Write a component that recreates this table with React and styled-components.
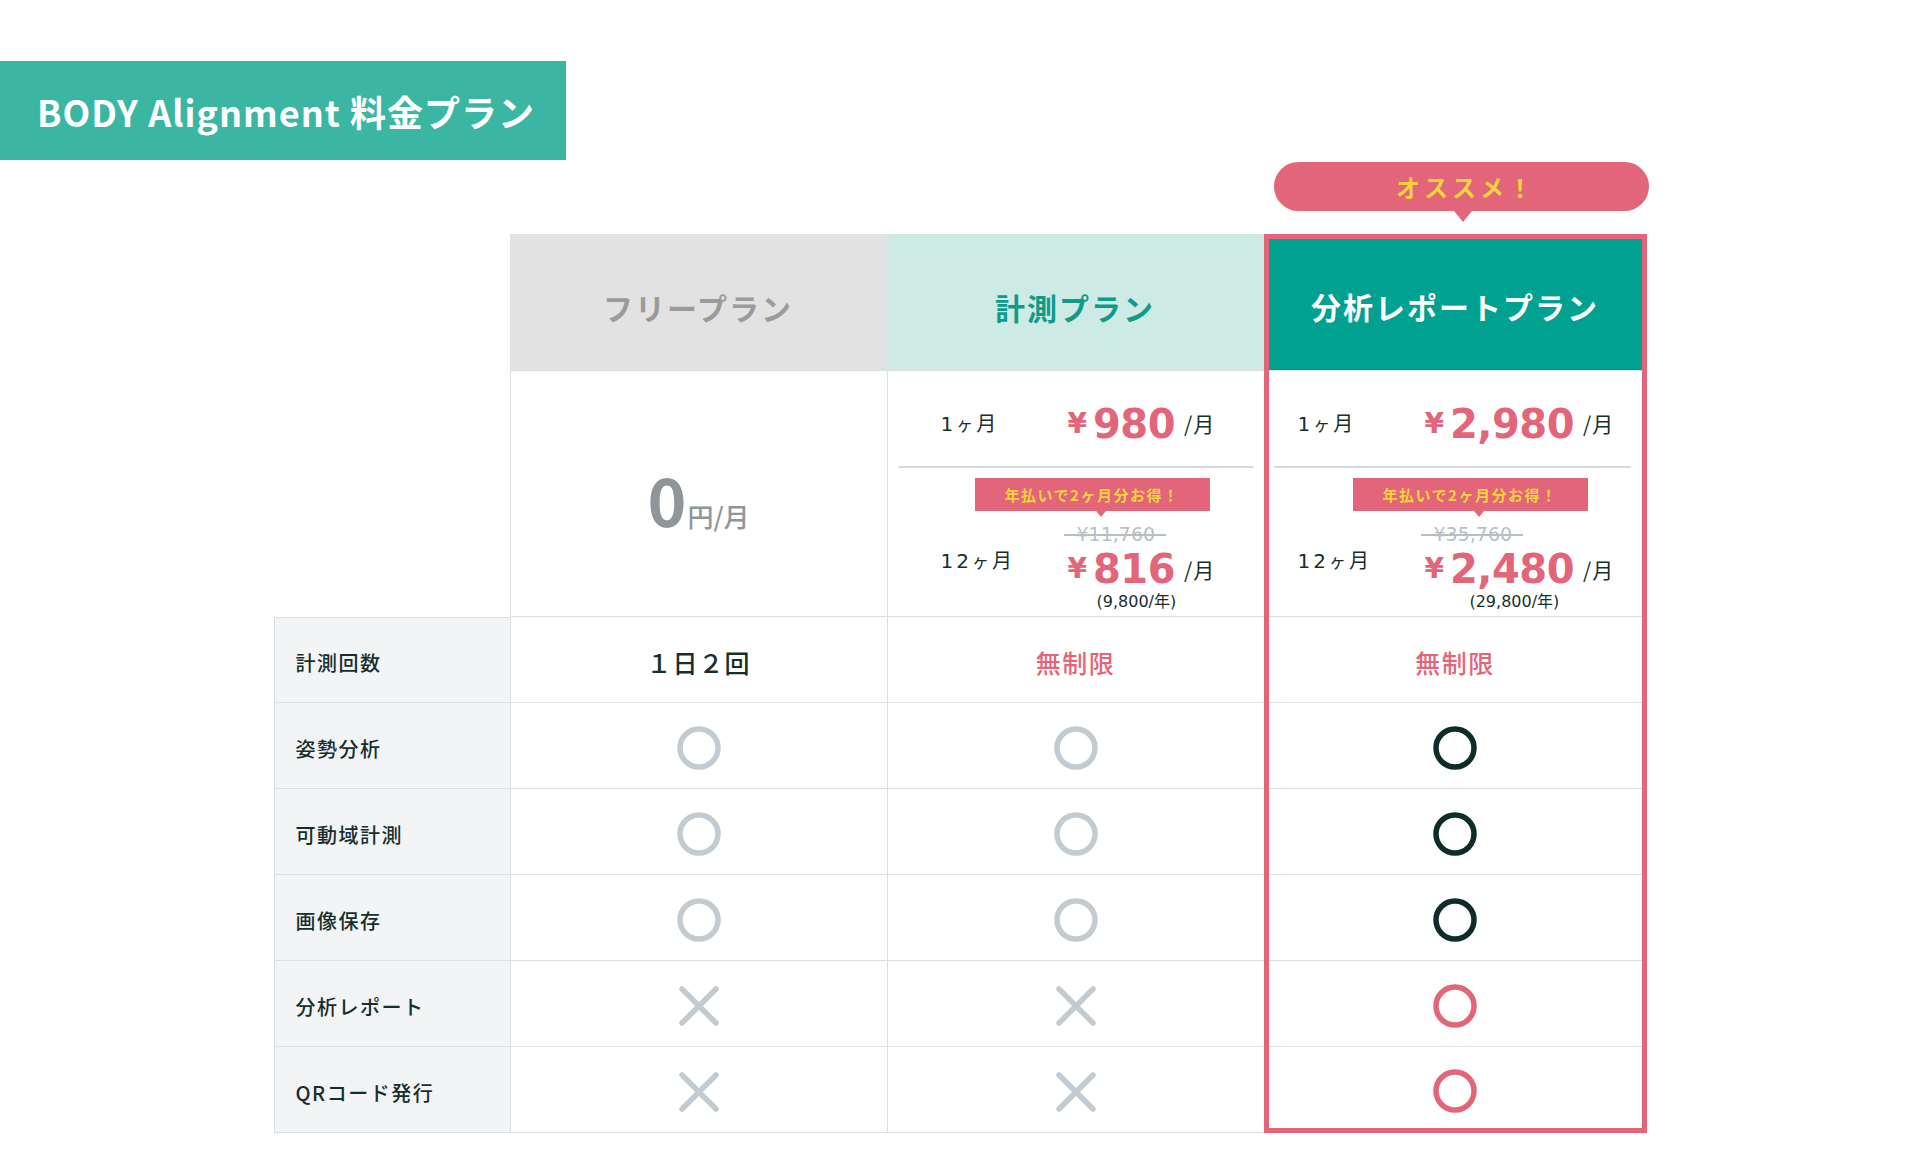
import React from "react";
import styled, { createGlobalStyle } from "styled-components";

const PINK = "#e26579";
const YELLOW = "#f8d33c";
const LINE = "#dcdfe2";
const DARK = "#172f2c";
const JP = `"Noto Sans CJK JP", "Noto Sans", sans-serif`;
const NUM = `"DejaVu Sans", "Noto Sans CJK JP", sans-serif`;

const Global = createGlobalStyle`
  html, body { margin: 0; padding: 0; background: #fff; }
  body { font-family: ${JP}; color: ${DARK}; }
  * { box-sizing: border-box; }
`;

const Page = styled.div`
  width: 1920px;
  min-height: 1153px;
  padding-top: 61px;
`;

const Title = styled.h1`
  margin: 0;
  width: 566px;
  height: 99px;
  display: flex;
  align-items: center;
  padding: 0 0 0 37px;
  background: #3bb6a2;
  color: #fff;
  font-family: ${JP};
  font-weight: 700;
  font-size: 36px;
  letter-spacing: 1px;
`;

const TableWrap = styled.div`
  width: 1373px;
  margin: 2px auto 0;
`;

const BadgeRow = styled.div`
  display: flex;
  justify-content: flex-end;
  margin-right: -2px;
  height: 72px;
`;

const Badge = styled.div`
  width: 375px;
  display: flex;
  flex-direction: column;
  align-items: center;
`;

const Pill = styled.div`
  width: 100%;
  height: 49px;
  border-radius: 25px;
  background: ${PINK};
  color: ${YELLOW};
  display: flex;
  align-items: center;
  justify-content: center;
  font-weight: 700;
  font-size: 24px;
  letter-spacing: 4px;
  padding-left: 10px;
`;

const Pointer = styled.div`
  width: 0;
  height: 0;
  margin-left: 3px;
  border-left: 9px solid transparent;
  border-right: 9px solid transparent;
  border-top: 11px solid ${PINK};
`;

const Table = styled.div`
  display: flex;
  align-items: flex-start;
`;

const LabelCol = styled.div`
  width: 236px;
  display: flex;
  flex-direction: column;
`;

const Spacer = styled.div`
  height: 383px;
`;

const LabelCell = styled.div`
  height: 86px;
  display: flex;
  align-items: center;
  padding: 5px 0 0 21px;
  background: #f3f4f6;
  border-left: 1px solid ${LINE};
  border-bottom: 1px solid ${LINE};
  &:nth-child(2) { border-top: 1px solid ${LINE}; }
  font-size: 20px;
  font-weight: 500;
  letter-spacing: 1.5px;
  color: ${DARK};
`;

const PlanCol = styled.div`
  width: ${(p) => p.$w}px;
  display: flex;
  flex-direction: column;
  ${(p) => (p.$featured ? `border: 5px solid ${PINK};` : "")}
`;

const Header = styled.div`
  height: ${(p) => p.$h}px;
  display: flex;
  align-items: center;
  justify-content: center;
  padding-top: ${(p) => p.$pt}px;
  background: ${(p) => p.$bg};
  color: ${(p) => p.$fg};
  font-size: 30px;
  font-weight: 700;
  letter-spacing: 2px;
`;

const PriceCell = styled.div`
  height: 247px;
  display: flex;
  flex-direction: column;
  border-left: ${(p) => (p.$noLeft ? "none" : `1px solid ${LINE}`)};
  border-bottom: 1px solid ${LINE};
  border-top: 1px solid ${LINE};
`;

const FreePrice = styled(PriceCell)`
  align-items: center;
  justify-content: center;
  padding-top: 8px;
  color: #8f9599;
`;

const ZeroGroup = styled.div`
  display: flex;
  align-items: baseline;
  line-height: 1;
`;

const Zero = styled.span`
  font-size: 66px;
  font-weight: 700;
`;

const ZeroUnit = styled.span`
  font-size: 26px;
  font-weight: 500;
  margin-left: 1px;
`;

const MonthRow = styled.div`
  height: 95px;
  display: flex;
  align-items: center;
  padding: 10px 0 0 ${(p) => p.$pl}px;
`;

const MonthLabel = styled.div`
  width: 127px;
  flex: none;
  font-family: ${NUM};
  font-size: 20px;
  line-height: 30px;
  letter-spacing: 3px;
  color: ${DARK};
  margin-top: ${(p) => p.$mt || 0}px;
  & small { font-family: ${JP}; font-size: 17px; }
  & span { font-family: ${JP}; }
`;

const PriceLine = styled.div`
  display: flex;
  align-items: center;
  line-height: 1;
  margin-top: ${(p) => p.$mt || 0}px;
`;

const Yen = styled.span`
  font-family: ${NUM};
  font-weight: 700;
  font-size: 28px;
  color: ${PINK};
  margin-right: 6px;
`;

const Amount = styled.span`
  font-family: ${NUM};
  font-weight: 700;
  font-size: 40px;
  letter-spacing: -0.5px;
  color: ${PINK};
`;

const PerMonth = styled.span`
  font-family: ${JP};
  font-size: 21px;
  color: ${DARK};
  margin-left: 9px;
  letter-spacing: 1px;
`;

const Divider = styled.div`
  height: 2px;
  background: #d5dadd;
  margin: ${(p) => p.$m};
`;

const Deal = styled.div`
  position: relative;
  width: 235px;
  height: 33px;
  margin: 10px 0 0 ${(p) => p.$ml}px;
  background: ${PINK};
  color: ${YELLOW};
  display: flex;
  align-items: center;
  justify-content: center;
  font-size: 15px;
  font-weight: 700;
  letter-spacing: 1.5px;
  &::after {
    content: "";
    position: absolute;
    left: 121px;
    bottom: -6px;
    border-left: 5px solid transparent;
    border-right: 5px solid transparent;
    border-top: 6px solid ${PINK};
  }
`;

const YearRow = styled.div`
  display: flex;
  align-items: flex-start;
  margin-top: 13px;
  padding-left: ${(p) => p.$pl}px;
`;

const PriceStack = styled.div`
  display: flex;
  flex-direction: column;
  align-items: flex-start;
`;

const Strike = styled.div`
  font-family: ${NUM};
  font-size: 19px;
  line-height: 20px;
  color: #b8bfc4;
  padding: 0 11px 0 13px;
  margin-left: -4px;
  background: linear-gradient(
    to bottom,
    transparent 10px,
    #b8bfc4 10px,
    #b8bfc4 12px,
    transparent 12px
  );
`;

const Yearly = styled.div`
  align-self: center;
  margin: 4px 10px 0 0;
  font-family: ${NUM};
  font-size: 16px;
  line-height: 18px;
  color: ${DARK};
`;

const FeatureCell = styled.div`
  height: ${(p) => p.$h || 86}px;
  display: flex;
  align-items: center;
  justify-content: center;
  padding-top: ${(p) => p.$pt ?? 4}px;
  border-left: ${(p) => (p.$noLeft ? "none" : `1px solid ${LINE}`)};
  border-bottom: ${(p) => (p.$last && p.$noLeft ? "none" : `1px solid ${LINE}`)};
`;

const FeatureText = styled.span`
  font-size: 25px;
  font-weight: 500;
  letter-spacing: ${(p) => (p.$pink ? 1.5 : 1)}px;
  color: ${(p) => (p.$pink ? PINK : DARK)};
`;

const Mark = ({ type, color }) => {
  if (type === "x") {
    return (
      <svg width="44" height="44" viewBox="0 0 44 44">
        <path d="M5 5 L39 39 M39 5 L5 39" stroke={color} strokeWidth="5.5" strokeLinecap="round" fill="none" />
      </svg>
    );
  }
  return (
    <svg width="44" height="44" viewBox="0 0 44 44">
      <circle cx="22" cy="22" r="19" stroke={color} strokeWidth="5.5" fill="none" />
    </svg>
  );
};

const GRAY = "#c3cbd0";
const features = [
  { label: "計測回数", cells: [{ t: "１日２回" }, { t: "無制限", pink: true }, { t: "無制限", pink: true }] },
  { label: "姿勢分析", cells: [{ m: "o", c: GRAY }, { m: "o", c: GRAY }, { m: "o", c: "#0e2d29" }] },
  { label: "可動域計測", cells: [{ m: "o", c: GRAY }, { m: "o", c: GRAY }, { m: "o", c: "#0e2d29" }] },
  { label: "画像保存", cells: [{ m: "o", c: GRAY }, { m: "o", c: GRAY }, { m: "o", c: "#0e2d29" }] },
  { label: "分析レポート", cells: [{ m: "x", c: GRAY }, { m: "x", c: GRAY }, { m: "o", c: PINK }] },
  { label: "QRコード発行", cells: [{ m: "x", c: GRAY }, { m: "x", c: GRAY }, { m: "o", c: PINK }] },
];

const renderCell = (cell) =>
  cell.t ? <FeatureText $pink={cell.pink}>{cell.t}</FeatureText> : <Mark type={cell.m} color={cell.c} />;

const PaidPrice = ({ pl, divider, dealMl, month, year, strike, yearly, noLeft }) => (
  <PriceCell $noLeft={noLeft}>
    <MonthRow $pl={pl}>
      <MonthLabel>1<small>ヶ</small><span>月</span></MonthLabel>
      <PriceLine>
        <Yen>¥</Yen>
        <Amount>{month}</Amount>
        <PerMonth>/月</PerMonth>
      </PriceLine>
    </MonthRow>
    <Divider $m={divider} />
    <Deal $ml={dealMl}>年払いで2ヶ月分お得！</Deal>
    <YearRow $pl={pl}>
      <MonthLabel $mt={21}>12<small>ヶ</small><span>月</span></MonthLabel>
      <PriceStack>
        <Strike>¥{strike}</Strike>
        <PriceLine $mt={5}>
          <Yen>¥</Yen>
          <Amount>{year}</Amount>
          <PerMonth>/月</PerMonth>
        </PriceLine>
        <Yearly>({yearly}/年)</Yearly>
      </PriceStack>
    </YearRow>
  </PriceCell>
);

export default function App() {
  return (
    <Page>
      <Global />
      <Title>BODY Alignment 料金プラン</Title>
      <TableWrap>
        <BadgeRow>
          <Badge>
            <Pill>オススメ！</Pill>
            <Pointer />
          </Badge>
        </BadgeRow>
        <Table>
          <LabelCol>
            <Spacer />
            {features.map((f) => (
              <LabelCell key={f.label}>{f.label}</LabelCell>
            ))}
          </LabelCol>

          <PlanCol $w={377}>
            <Header $h={136} $pt={9} $bg="#e2e2e2" $fg="#9b9b9b">フリープラン</Header>
            <FreePrice>
              <ZeroGroup>
                <Zero>0</Zero>
                <ZeroUnit>円/月</ZeroUnit>
              </ZeroGroup>
            </FreePrice>
            {features.map((f) => (
              <FeatureCell key={f.label}>{renderCell(f.cells[0])}</FeatureCell>
            ))}
          </PlanCol>

          <PlanCol $w={377}>
            <Header $h={136} $pt={9} $bg="#cdeae5" $fg="#0d9c89">計測プラン</Header>
            <PaidPrice
              pl={53}
              divider="0 11px"
              dealMl={87}
              month="980"
              year="816"
              strike="11,760"
              yearly="9,800"
            />
            {features.map((f) => (
              <FeatureCell key={f.label}>{renderCell(f.cells[1])}</FeatureCell>
            ))}
          </PlanCol>

          <PlanCol $w={383} $featured>
            <Header $h={131} $pt={3} $bg="#00a190" $fg="#ffffff">分析レポートプラン</Header>
            <PaidPrice
              pl={29}
              divider="0 11px 0 5px"
              dealMl={84}
              month="2,980"
              year="2,480"
              strike="35,760"
              yearly="29,800"
              noLeft
            />
            {features.map((f, i) => (
              <FeatureCell
                key={f.label}
                $noLeft
                $last={i === features.length - 1}
                $h={i === features.length - 1 ? 81 : 86}
                $pt={i === features.length - 1 ? 6 : 4}
              >
                {renderCell(f.cells[2])}
              </FeatureCell>
            ))}
          </PlanCol>
        </Table>
      </TableWrap>
    </Page>
  );
}
